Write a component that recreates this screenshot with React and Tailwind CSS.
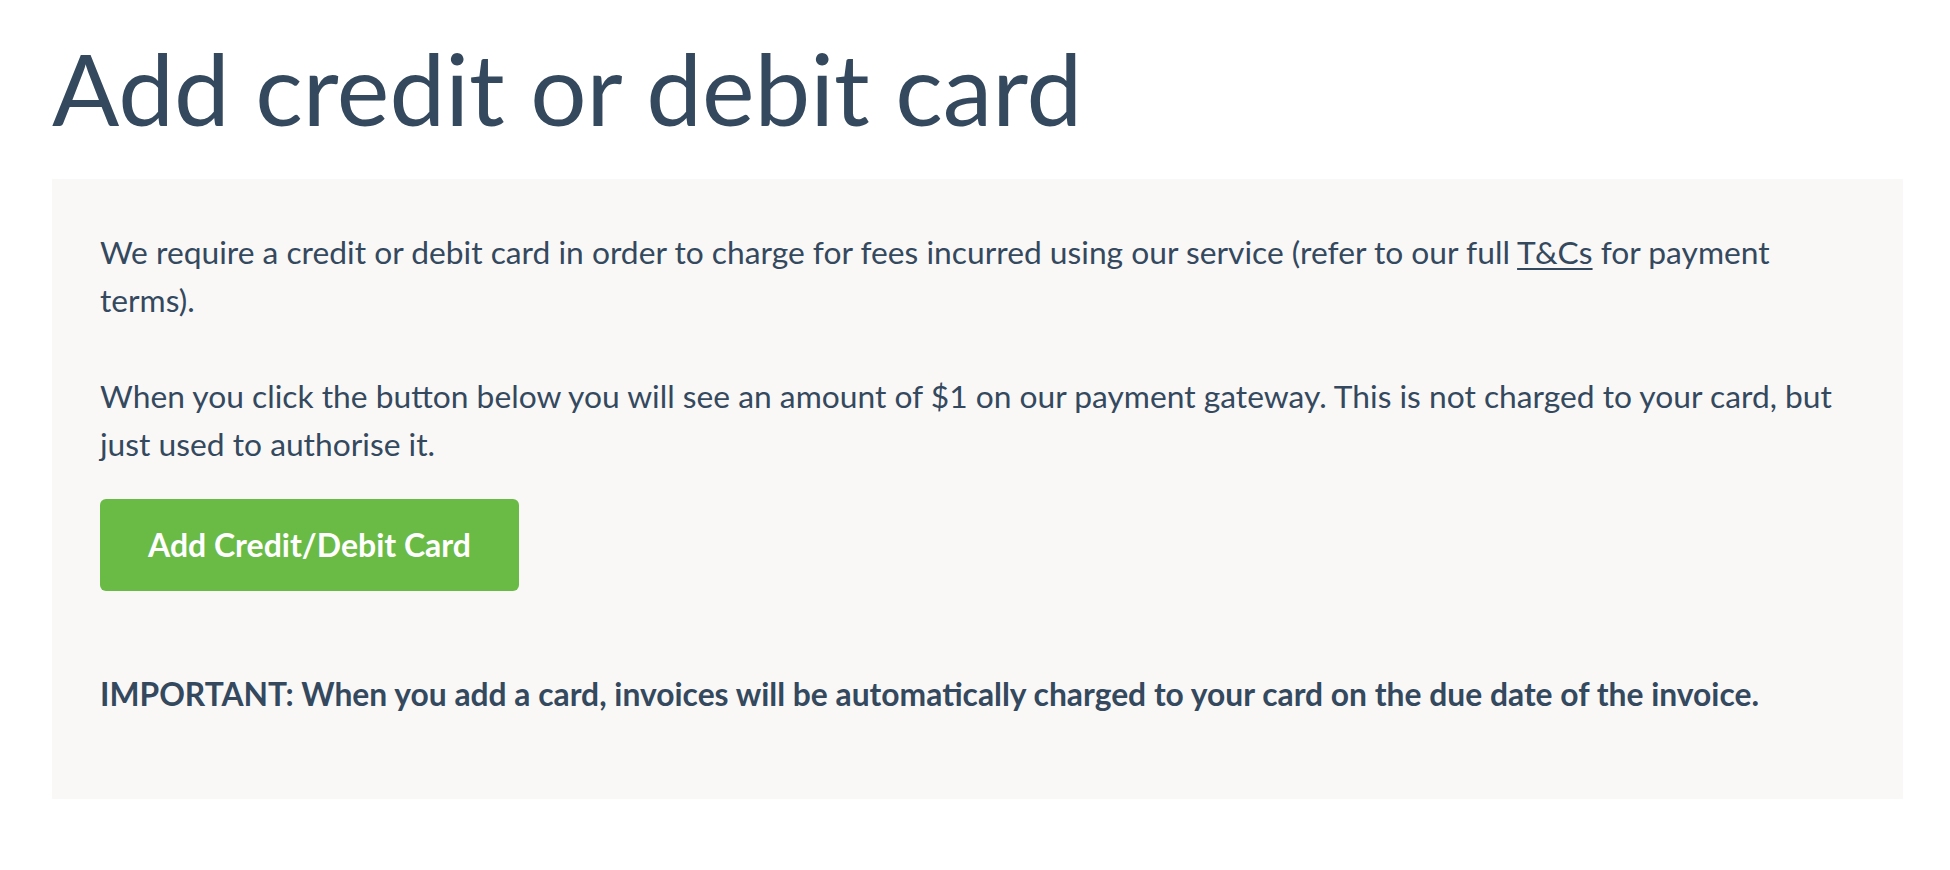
import React from "react";

const App = () => {
  return (
    <div className="min-h-screen bg-white text-[#34495e] font-['Lato','Liberation_Sans',sans-serif] pl-[52px] pr-[47px] pt-[28px]">
      <h1 className="text-[99.5px] leading-[1.2] font-normal">Add credit or debit card</h1>
      <div className="mt-[32px] bg-[#f9f8f7] pl-[48px] pr-[40px] pt-[49px] pb-[81px]">
        <p className="text-[31.75px] leading-[48px]">
          We require a credit or debit card in order to charge for fees incurred using our service (refer to our full{" "}
          <a href="#" className="underline underline-offset-[4px] decoration-2">T&amp;Cs</a> for payment terms).
        </p>
        <p className="mt-[48px] text-[31.75px] leading-[48px]">
          When you click the button below you will see an amount of $1 on our payment gateway. This is not charged to
          your card, but just used to authorise it.
        </p>
        <button className="mt-[31px] h-[92px] px-[48px] rounded-[6px] bg-[#6abb46] text-white text-[32px] font-bold flex items-center">
          Add Credit/Debit Card
        </button>
        <p className="mt-[79px] text-[31.8px] leading-[48px] font-bold">
          IMPORTANT: When you add a card, invoices will be automatically charged to your card on the due date of the
          invoice.
        </p>
      </div>
    </div>
  );
};

export default App;
